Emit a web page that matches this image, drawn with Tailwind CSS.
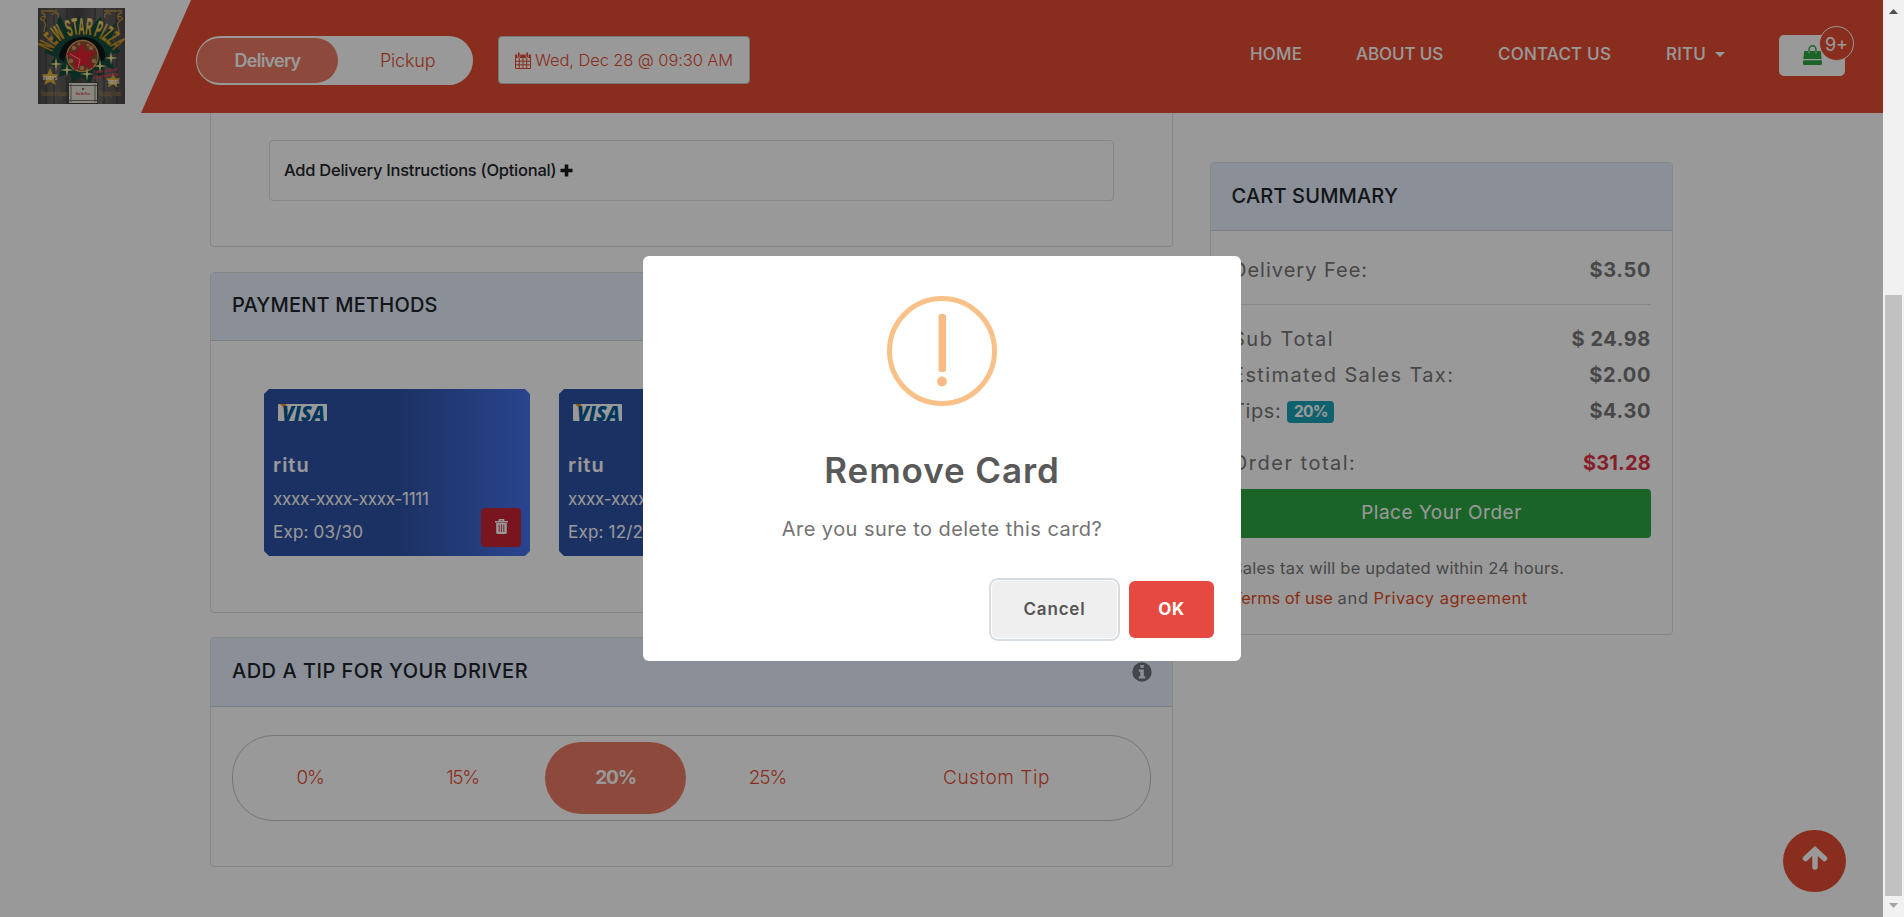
<!DOCTYPE html>
<html lang="en">
<head>
<meta charset="utf-8">
<title>New Star Pizza - Checkout</title>
<script src="https://cdn.jsdelivr.net/npm/@tailwindcss/browser@4"></script>
</head>
<body class="relative h-[917px] w-[1904px] overflow-hidden bg-white font-['Inter',sans-serif] whitespace-nowrap">
<div class="flex h-full">
  <div class="h-full w-[1883px]">
    <header class="flex h-[113px]">
      <div class="w-[141px] pt-2 pl-[38px]">
        <svg width="87" height="96" viewBox="0 0 87 96">
          <defs>
            <linearGradient id="gold" x1="0" y1="0" x2="0" y2="1"><stop offset="0" stop-color="#fff0a0"/><stop offset=".5" stop-color="#e6b030"/><stop offset="1" stop-color="#b07818"/></linearGradient>
            <linearGradient id="wood" x1="0" x2="1"><stop offset="0" stop-color="#4a4847"/><stop offset=".2" stop-color="#686563"/><stop offset=".45" stop-color="#454343"/><stop offset=".7" stop-color="#6b6967"/><stop offset="1" stop-color="#4b4948"/></linearGradient>
            <path id="arc" d="M14 44C22 20 66 20 76 45"/>
          </defs>
          <rect width="87" height="96" fill="url(#wood)"/>
          <path d="M8 0v96M16 0v96M29 0v96M57 0v96M66 0v96M79 0v96" stroke="#3b393a" stroke-width="1"/>
          <path d="M21 6l9 18L41 8l9 15L63 8l2 18 14-12-6 18 10 12-12 3 6 14-12-3 2 13-11-5-4 10-8-7-10 6-2-10-11 4 2-12-13 1 7-9-12-5 10-7z" fill="#174b3c"/>
          <path d="M21 50C23 22 66 22 68 50l-5 4C60 26 30 26 26 54z" fill="#101516"/>
          <path d="M3 3h16M3 5c6 0 5 8 1 7s1-5 3-3M5 13c5 3 1 6 1 11M84 3H66M84 5c-6 0-5 8-1 7s-1-5-3-3M82 13c-5 3-1 6-1 11M14 7c3-5 8-1 6 3M73 7c-3-5-8-1-6 3" fill="none" stroke="#b98c45" stroke-width="1.300"/>
          <circle cx="44.500" cy="48" r="15.500" fill="#8f4a30" stroke="#d29f5c" stroke-width="1.300"/>
          <g fill="#cf9560"><circle cx="36" cy="40" r="2.300"/><circle cx="53" cy="40" r="2.300"/><circle cx="56" cy="53" r="2.300"/><circle cx="33" cy="53" r="2.300"/><circle cx="44" cy="60" r="2.300"/><circle cx="41" cy="36" r="1.500"/><circle cx="50" cy="37" r="1.500"/></g>
          <path d="M44 35l3.400 8.800 11.100-.5-8 7.400 5.500 10.500-10.500-5.400-9.500 6.700 1.500-10.500-10-6.700 11.800-1.200z" fill="#e51f35"/>
          <path d="M32 46l10 5.500-2 9" fill="none" stroke="#ff8c98" stroke-width="1"/>
          <text font-family="Liberation Sans" font-weight="700" font-size="23" fill="url(#gold)" stroke="url(#gold)" stroke-width=".5" textLength="74" lengthAdjust="spacingAndGlyphs"><textPath href="#arc">NEW STAR PIZZA</textPath></text>
          <g fill="#f7df8a"><path d="M18 49l1 6 6 1-6 1-1 6-1-6-6-1 6-1zM29 55l1 6 6 1-6 1-1 6-1-6-6-1 6-1zM49 59l1 6 6 1-6 1-1 6-1-6-6-1 6-1zM62 51l1 6 6 1-6 1-1 6-1-6-6-1 6-1zM73 43l1 6 6 1-6 1-1 6-1-6-6-1 6-1z"/></g>
          <path d="M12 60l2.500 6 6 .5-4.500 4 1.500 6.500-5.500-3.500L6.500 77 8 70.500l-4.500-4 6-.5zM75 65l2 5 5.500.5-4 3.500 1 5.500-4.500-3-5 3 1.500-5.500-4-3.500 5.500-.5z" fill="#e3b33a"/>
          <text x="5" y="72" font-family="Liberation Sans" font-weight="700" font-size="5" fill="#fff" textLength="14" lengthAdjust="spacingAndGlyphs">RANDY'S</text>
          <text x="70" y="75.500" font-family="Liberation Sans" font-weight="700" font-size="4.500" fill="#fff" textLength="11" lengthAdjust="spacingAndGlyphs">FRESH</text>
          <g transform="rotate(-8 68 66)"><text x="55" y="64" font-family="Liberation Sans" font-weight="700" font-size="4.500" fill="#f0405a" textLength="25" lengthAdjust="spacingAndGlyphs">Take out or</text><text x="55" y="69" font-family="Liberation Sans" font-weight="700" font-size="4.500" fill="#f0405a" textLength="25" lengthAdjust="spacingAndGlyphs">Delivery</text></g>
          <text x="3" y="87.500" font-family="Liberation Serif" font-size="9" fill="#b98f3c" textLength="26" lengthAdjust="spacingAndGlyphs">Strawberry Square</text>
          <text x="61" y="87.500" font-family="Liberation Serif" font-size="9" fill="#b98f3c" textLength="22" lengthAdjust="spacingAndGlyphs">Shopping Center</text>
          <rect x="30.500" y="74.500" width="29" height="21" fill="#e5e2d6" stroke="#45413a"/>
          <path d="M33 76v18M57 76v18M31 77.500h28M31 92.500h28" stroke="#77736a"/>
          <text x="38" y="87" font-family="Liberation Sans" font-weight="700" font-size="3.500" fill="#d3202f" textLength="14" lengthAdjust="spacingAndGlyphs">New Star Pizza</text>
          <circle cx="45" cy="81" r="1" fill="#444"/>
        </svg>
      </div>
      <div class="flex flex-1 bg-[#e44e32] pl-[55px] [clip-path:polygon(50px_0,100%_0,100%_100%,0_100%)]">
        <div class="mt-9 flex h-[49px] w-[277px] rounded-full bg-white px-px py-[2px] text-[18px] leading-[46px]">
          <div class="w-[141px] shrink-0 rounded-full bg-[#eb7a64] text-center font-semibold tracking-[-0.77px] text-white">Delivery</div>
          <div class="pl-[42px] font-light tracking-[-0.2px] text-[#e44e32]">Pickup</div>
        </div>
        <div class="mt-9 ml-[25px] flex h-[48px] w-[252px] items-center rounded-[4px] border border-[#c5c9cf] bg-white pl-4 text-[16.500px] font-light tracking-[-0.1px] text-[#e44e32]">
          <svg width="16" height="17" viewBox="0 0 16 17" class="mr-[4px]"><path d="M.5 5.500h15v11H.5zM4.300 5.500v11M8 5.500v11M11.700 5.500v11M.5 9.200h15M.5 12.800h15" fill="none" stroke="#e44e32" stroke-width="1"/><path d="M0 2.500h16V6H0z" fill="#e44e32"/><path d="M3.800 1.200v3M12.200 1.200v3" stroke="#fff" stroke-width="3" stroke-linecap="round"/><path d="M3.800 1.200v3M12.200 1.200v3" stroke="#e44e32" stroke-width="1.700" stroke-linecap="round"/></svg>
          Wed, Dec 28 @ 09:30 AM
        </div>
        <nav class="ml-[500px] flex h-[110px] items-center text-[17px] font-medium text-white">
          <a class="w-[106px] tracking-[0.2px]">HOME</a>
          <a class="w-[142px] tracking-[-0.1px]">ABOUT US</a>
          <a class="w-[168px] tracking-[0.2px]">CONTACT US</a>
          <a class="flex w-[113px] items-center gap-[9px] tracking-[0.2px]">RITU <svg width="10" height="5" viewBox="0 0 10 5" class="-mt-[2px]"><path d="M0 0h10L5 5z" fill="#fff"/></svg></a>
        </nav>
        <div class="relative mt-[35px] h-[41px] w-[66px] rounded-[5px] bg-white">
          <svg class="mt-[10px] ml-6" width="19" height="20" viewBox="0 0 19 20"><path d="M1.200 6h16.600l.9 8H.3zM.2 15.200h18.600l.2 3.300q0 1.500-1.500 1.500h-16Q0 20 0 18.500z" fill="#2ca744"/><path d="M6 6V4.800a3.500 4 0 0 1 7 0V6" fill="none" stroke="#2ca744" stroke-width="1.500"/><path d="M6 6v2.500M13 6v2.500" stroke="#fff" stroke-width=".8"/></svg>
          <div class="absolute -top-[9px] left-[40px] h-[35px] w-[35px] rounded-full border border-white bg-[#e44e32] text-center text-[18px] leading-[35px] text-white">9+</div>
        </div>
      </div>
    </header>
    <main class="flex gap-[37px] pl-[210px]">
      <div class="w-[963px]">
        <section class="h-[134px] rounded-b-[4px] border border-t-0 border-[#dfdfdf] pt-[27px] pl-[58px]">
          <div class="flex h-[61px] w-[845px] items-center rounded-[4px] border border-[#dfdfdf] pl-[14px] text-[16.500px] font-medium tracking-[-0.26px] text-[#212529]">Add Delivery Instructions (Optional)
            <svg width="13" height="13" viewBox="0 0 13 13" class="ml-[4px]"><path d="M6.500 .5v12M.5 6.500h12" stroke="#15181c" stroke-width="3.600"/></svg>
          </div>
        </section>
        <section class="mt-[25px] h-[341px] rounded-[4px] border border-[#dfdfdf]">
          <div class="h-[68px] border-b border-[#cdd2db] bg-[#e8eefd] pl-[21px] text-[20px] leading-[64px] font-medium tracking-[0.2px] text-[#212529]">PAYMENT METHODS</div>
          <div class="flex gap-[29px] overflow-hidden pt-[48px] pl-[53px]">
            <div class="relative h-[167px] w-[266px] shrink-0 bg-linear-to-r from-[#2f53a5] from-50% to-[#4573ee] pl-[9px] text-white [clip-path:polygon(5px_0,261px_0,266px_5px,266px_162px,261px_100%,5px_100%,0_162px,0_5px)]">
              <svg class="mt-[15px] ml-[5px] block" width="50" height="18" viewBox="0 0 50 18"><rect width="49" height="17" rx="1" fill="#fff"/><path d="M2 0h6l2 8z" fill="#e89a1c"/><text x="4" y="16.500" font-family="Open Sans, sans-serif" font-size="21.500" font-weight="800" font-style="italic" fill="#005b9c" textLength="43" lengthAdjust="spacingAndGlyphs">VISA</text></svg>
              <div class="mt-[27px] text-[20px] leading-[32px] font-semibold tracking-[1px]">ritu</div>
              <div class="mt-[2px] text-[17px] leading-[33px] tracking-[-0.26px]">xxxx-xxxx-xxxx-1111</div>
              <div class="text-[17px] leading-[33px] tracking-[0.2px]">Exp: 03/30</div>
              <div class="absolute right-[9px] bottom-[9px] flex h-[39px] w-[40px] items-center justify-center rounded-[4px] bg-[#c82333]"><svg width="13" height="15" viewBox="0 0 13 15" class="-mt-[2px]"><path d="M4.500 2V.8h4V2M0 2.800h13" fill="none" stroke="#fff" stroke-width="1.600"/><path d="M1.200 4h10.600v9.500q0 1.500-1.500 1.500H2.700q-1.500 0-1.500-1.500z" fill="#fff"/><path d="M4.200 5.500V13M6.500 5.500V13M8.800 5.500V13" stroke="#c82333" stroke-width=".9"/></svg></div>
            </div>
            <div class="h-[167px] w-[266px] shrink-0 bg-linear-to-r from-[#2f53a5] from-50% to-[#4573ee] pl-[9px] text-white [clip-path:polygon(5px_0,261px_0,266px_5px,266px_162px,261px_100%,5px_100%,0_162px,0_5px)]">
              <svg class="mt-[15px] ml-[5px] block" width="50" height="18" viewBox="0 0 50 18"><rect width="49" height="17" rx="1" fill="#fff"/><path d="M2 0h6l2 8z" fill="#e89a1c"/><text x="4" y="16.500" font-family="Open Sans, sans-serif" font-size="21.500" font-weight="800" font-style="italic" fill="#005b9c" textLength="43" lengthAdjust="spacingAndGlyphs">VISA</text></svg>
              <div class="mt-[27px] text-[20px] leading-[32px] font-semibold tracking-[1px]">ritu</div>
              <div class="mt-[2px] text-[17px] leading-[33px] tracking-[-0.26px]">xxxx-xxxx-xxxx-1111</div>
              <div class="text-[17px] leading-[33px] tracking-[0.2px]">Exp: 12/25</div>
            </div>
          </div>
        </section>
        <section class="mt-[24px] h-[230px] rounded-[4px] border border-[#dfdfdf]">
          <div class="flex h-[69px] justify-between border-b border-[#cdd2db] bg-[#e8eefd] pr-[20px] pl-[21px] text-[20px] leading-[66px] font-medium tracking-[0.5px] text-[#212529]">ADD A TIP FOR YOUR DRIVER
            <svg width="20" height="20" viewBox="0 0 20 20" class="mt-[24px]"><circle cx="10" cy="10" r="9.700" fill="#6c757d"/><path d="M8.400 3h3.400v2.800H8.400zM6.800 7.500h5v6.700h1.500v2.300H6.800v-2.300h1.500V9.800H6.800z" fill="#e8eefd"/></svg>
          </div>
          <div class="mt-[28px] ml-[21px] flex h-[86px] w-[919px] items-center rounded-[41px] border border-[#c4c4c4] text-center text-[19px] leading-[72px] font-light text-[#e44e32]">
            <div class="w-[154px] tracking-[-1.300px]">0%</div>
            <div class="w-[151px] tracking-[-1.300px]">15%</div>
            <div class="ml-[7px] h-[72px] w-[141px] rounded-[36px] bg-[#eb7a64] font-bold tracking-[-1.200px] text-white">20%</div>
            <div class="ml-[8px] w-[147px] tracking-[-1.100px]">25%</div>
            <div class="flex-1 pl-[2px] tracking-[0.55px]">Custom Tip</div>
          </div>
        </section>
      </div>
      <aside class="mt-[49px] h-[473px] w-[463px] rounded-[4px] border border-[#dfdfdf] text-[20px] text-[#777]">
        <div class="h-[68px] border-b border-[#cdd2db] bg-[#e8eefd] pl-[20.500px] text-[20px] leading-[66px] font-medium tracking-[0.17px] text-[#212529]">CART SUMMARY</div>
        <div class="pt-[21px] pr-[21px] pl-[21px] leading-[36px]">
          <div class="flex justify-between"><span class="tracking-[1px]">Delivery Fee:</span><b class="tracking-[0.6px]">$3.50</b></div>
          <div class="mt-[16px] h-px bg-[#dfdfdf]"></div>
          <div class="mt-[16px] flex justify-between"><span class="tracking-[1.500px]">Sub Total</span><b class="tracking-[0.6px]">$ 24.98</b></div>
          <div class="flex justify-between"><span class="tracking-[1.380px]">Estimated Sales Tax:</span><b class="tracking-[0.6px]">$2.00</b></div>
          <div class="flex justify-between"><span class="flex items-center tracking-[0.61px]">Tips: <span class="mt-[2px] ml-[6px] h-[22px] w-[47px] rounded-[4px] bg-[#19a2b8] text-center text-[15.500px] leading-[22px] font-bold tracking-[-0.8px] text-white">20%</span></span><b class="tracking-[0.6px]">$4.30</b></div>
          <div class="mt-[16px] flex justify-between"><span class="tracking-[1.500px]">Order total:</span><b class="tracking-[0.200px] text-[#dc3546]">$31.28</b></div>
          <div class="mt-[8px] h-[49px] rounded-[4px] bg-[#2ca744] text-center text-[19px] leading-[47px] tracking-[0.51px] text-white">Place Your Order</div>
          <div class="mt-[15px] text-[16.500px] leading-[30px] tracking-[0.2px]">Sales tax will be updated within 24 hours.</div>
          <div class="text-[16.500px] leading-[30px]"><span class="tracking-[-0.1px] text-[#e44e1f]">Terms of use</span> <span class="tracking-[0.8px]">and</span> <span class="tracking-[0.45px] text-[#e44e1f]">Privacy agreement</span></div>
        </div>
      </aside>
    </main>
  </div>
  <div class="flex w-[21px] flex-col items-center bg-[#f1f1f1]">
    <svg class="mt-[9px]" width="9" height="5" viewBox="0 0 9 5"><path d="M4.500 0L9 5H0z" fill="#505050"/></svg>
    <div class="mt-[281px] h-[601px] w-[17px] bg-[#c1c1c1]"></div>
    <svg class="mt-[7px]" width="9" height="5" viewBox="0 0 9 5"><path d="M0 0h9L4.500 5z" fill="#a3a3a3"/></svg>
  </div>
</div>
<!-- back to top -->
<div class="absolute top-[830px] left-[1783px] flex h-[62px] w-[63px] items-center justify-center rounded-full bg-[#e44e32]"><svg width="26" height="24" viewBox="0 0 26 24" class="-mt-[6px]"><path d="M13 5v16M3.500 12.500L13 3.800l9.500 8.700" fill="none" stroke="#fff" stroke-width="5.500" stroke-linecap="round"/></svg></div>
<!-- overlay and dialog -->
<div class="absolute inset-y-0 left-0 w-[1883px] bg-black/40">
  <div class="absolute top-[256px] left-[643px] flex h-[405px] w-[598px] flex-col items-center rounded-[6px] bg-white">
    <svg class="mt-[40px]" width="110" height="110" viewBox="0 0 110 110"><circle cx="55" cy="55" r="52.500" fill="none" stroke="#f9c188" stroke-width="5"/><rect x="51.500" y="18" width="7.500" height="58" rx="2.500" fill="#f8bb86"/><circle cx="55" cy="85.500" r="4.900" fill="#f8bb86"/></svg>
    <div class="mt-[42px] text-[35px] leading-[44px] font-semibold tracking-[0.9px] text-[#595959]">Remove Card</div>
    <div class="mt-[22px] text-[20px] leading-[30px] tracking-[0.46px] text-[#737373]">Are you sure to delete this card?</div>
    <div class="mt-[37px] mr-[27px] flex gap-[12px] self-end text-[17px] leading-[57px]">
      <div class="w-[125px] rounded-[6px] bg-[#efefef] text-center font-semibold tracking-[0.8px] text-[#555] shadow-[0_0_0_1px_#fff,0_0_0_3px_#d5dce2]">Cancel</div>
      <div class="w-[85px] rounded-[6px] bg-[#e64942] text-center font-bold tracking-[0.5px] text-white">OK</div>
    </div>
  </div>
</div>
</body>
</html>
